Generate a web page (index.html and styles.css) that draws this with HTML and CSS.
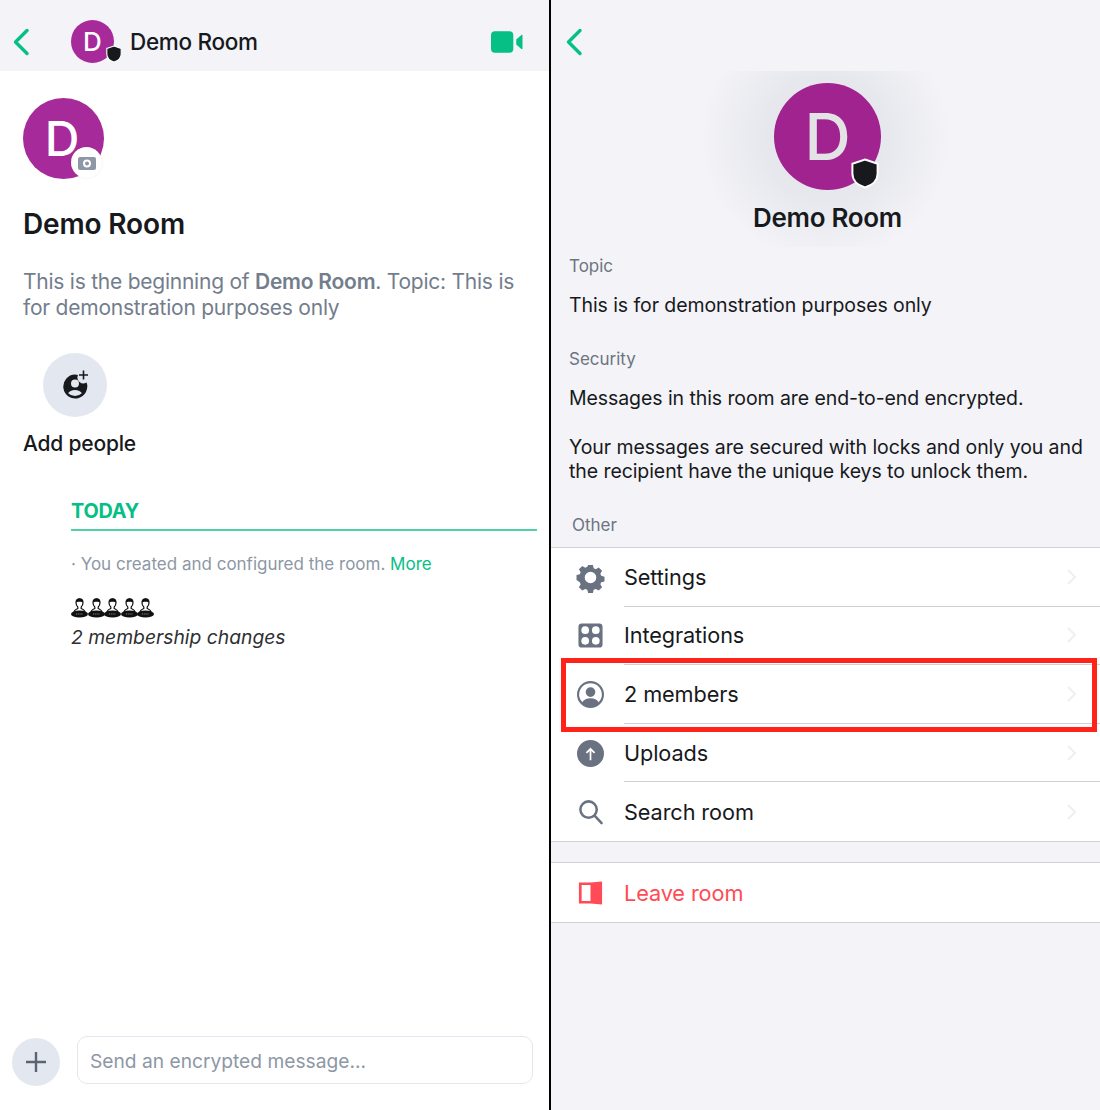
FILE: index.html
```html
<!DOCTYPE html>
<html lang="en">
<head>
<meta charset="utf-8">
<title>Demo Room</title>
<link rel="stylesheet" href="styles.css">
</head>
<body>
<div class="screens">
  <main class="room">
    <header class="room-bar">
      <svg class="back" width="18" height="28" viewBox="0 0 18 28"><path d="M15 2.500 3.500 14 15 25.500" /></svg>
      <div class="bar-avatar">
        <span>D</span>
        <svg class="shield shield-small" viewBox="0 0 20 22"><path d="M10 1 19 4v7c0 5-4 8.500-9 10C5 19.500 1 16 1 11V4z"/></svg>
      </div>
      <div class="bar-title">Demo Room</div>
      <svg class="video" width="32" height="22" viewBox="0 0 33 22"><rect x="0" y="0" width="23" height="22" rx="4"/><path d="M26 8.500 31 4c.8-.7 1.500-.4 1.500.6v12.800c0 1-.7 1.300-1.500.6l-5-4.500z"/></svg>
    </header>
    <section class="room-body">
      <div class="intro-avatar">
        <span>D</span>
        <div class="camera-badge">
          <svg width="18" height="14" viewBox="0 0 18 14"><path fill-rule="evenodd" d="M2 1h14a2 2 0 0 1 2 2v9a2 2 0 0 1-2 2H2a2 2 0 0 1-2-2V3a2 2 0 0 1 2-2zm7 2.500a4 4 0 1 0 0 8 4 4 0 0 0 0-8zm0 2a2 2 0 1 1 0 4 2 2 0 0 1 0-4z"/></svg>
        </div>
      </div>
      <h1 class="intro-title">Demo Room</h1>
      <p class="intro-text">This is the beginning of <b>Demo Room</b>. Topic: This is for demonstration purposes only</p>
      <div class="add-circle">
        <svg width="30" height="30" viewBox="-2 1 30 30"><path fill-rule="evenodd" d="M13 5.500a12 12 0 0 1 3 .4 6 6 0 0 0 8.600 7.600 12 12 0 1 1-11.600-8zm0 5a4 4 0 1 0 0 8 4 4 0 0 0 0-8zm0 10.500c-3.300 0-6 1.300-6.800 3.300a9.800 9.800 0 0 0 13.600 0C19 22.300 16.300 21 13 21z"/><path class="add-plus" d="M21.500 1.500v9M17 6h9"/></svg>
      </div>
      <div class="add-label">Add people</div>
      <div class="timeline">
        <div class="today">TODAY</div>
        <div class="event">· You created and configured the room. <a class="more">More</a></div>
        <div class="people">
          <svg class="person" viewBox="0 0 17 20"><use href="#person-shape"/></svg>
          <svg class="person" viewBox="0 0 17 20"><use href="#person-shape"/></svg>
          <svg class="person" viewBox="0 0 17 20"><use href="#person-shape"/></svg>
          <svg class="person" viewBox="0 0 17 20"><use href="#person-shape"/></svg>
          <svg class="person" viewBox="0 0 17 20"><use href="#person-shape"/></svg>
        </div>
        <div class="changes">2 membership changes</div>
      </div>
    </section>
    <footer class="composer">
      <div class="plus-circle">
        <svg width="22" height="22" viewBox="0 0 22 22"><path d="M11 1v20M1 11h20"/></svg>
      </div>
      <div class="message-box">Send an encrypted message...</div>
    </footer>
  </main>

  <aside class="details">
    <div class="details-bar">
      <svg class="back" width="18" height="28" viewBox="0 0 18 28"><path d="M15 2.500 3.500 14 15 25.500"/></svg>
    </div>
    <div class="hero">
      <div class="hero-avatar">
        <span>D</span>
        <svg class="shield shield-large" viewBox="0 0 20 22"><path d="M10 1 19 4v7c0 5-4 8.500-9 10C5 19.500 1 16 1 11V4z"/></svg>
      </div>
      <div class="hero-name">Demo Room</div>
    </div>
    <div class="label label-topic">Topic</div>
    <p class="copy copy-topic">This is for demonstration purposes only</p>
    <div class="label label-security">Security</div>
    <p class="copy copy-security">Messages in this room are end-to-end encrypted.</p>
    <p class="copy copy-keys">Your messages are secured with locks and only you and the recipient have the unique keys to unlock them.</p>
    <div class="label label-other">Other</div>

    <div class="menu">
      <div class="row">
        <svg class="row-icon" viewBox="0 0 28 28"><path fill-rule="evenodd" d="M11.500 1h5l.8 3.400 2.200 1 3-1.800 3.500 3.500-1.800 3 .9 2.200 3.400.8v5l-3.400.8-.9 2.200 1.800 3-3.500 3.500-3-1.800-2.200.9-.8 3.400h-5l-.8-3.400-2.200-.9-3 1.800-3.500-3.500 1.800-3-.9-2.200L-.5 16.500v-5l3.400-.8.900-2.200-1.800-3L5.500 2l3 1.800 2.200-.9zM14 8a6 6 0 1 0 0 12 6 6 0 0 0 0-12z"/></svg>
        <div class="row-main"><span>Settings</span><svg class="chev" width="9" height="16" viewBox="0 0 9 16"><path d="M1 1l7 7-7 7"/></svg></div>
      </div>
      <div class="row">
        <svg class="row-icon" viewBox="0 0 28 28"><path fill-rule="evenodd" d="M5 1.500h18a3.500 3.500 0 0 1 3.500 3.500v18a3.500 3.500 0 0 1-3.500 3.500H5A3.500 3.500 0 0 1 1.500 23V5A3.500 3.500 0 0 1 5 1.500zM8.500 4.500a4 4 0 1 0 0 8 4 4 0 0 0 0-8zm11 0a4 4 0 1 0 0 8 4 4 0 0 0 0-8zm-11 11a4 4 0 1 0 0 8 4 4 0 0 0 0-8zm11 0a4 4 0 1 0 0 8 4 4 0 0 0 0-8z"/></svg>
        <div class="row-main"><span>Integrations</span><svg class="chev" width="9" height="16" viewBox="0 0 9 16"><path d="M1 1l7 7-7 7"/></svg></div>
      </div>
      <div class="row">
        <svg class="row-icon" viewBox="0 0 28 28"><path fill-rule="evenodd" d="M14 0a14 14 0 1 1 0 28 14 14 0 0 1 0-28zm0 2.300a11.700 11.700 0 0 0-8.500 19.800C7 19.200 10.200 18 14 18s7 1.200 8.500 4.100A11.700 11.700 0 0 0 14 2.300zM14 6.500a5 5 0 1 1 0 10 5 5 0 0 1 0-10z"/></svg>
        <div class="row-main"><span>2 members</span><svg class="chev" width="9" height="16" viewBox="0 0 9 16"><path d="M1 1l7 7-7 7"/></svg></div>
      </div>
      <div class="row">
        <svg class="row-icon" viewBox="0 0 28 28"><path fill-rule="evenodd" d="M14 0a14 14 0 1 1 0 28 14 14 0 0 1 0-28zm-.9 8.800-4 4 1.300 1.300 2.700-2.700V21h1.800v-9.600l2.700 2.700 1.300-1.300-4-4-.9-.9z"/></svg>
        <div class="row-main"><span>Uploads</span><svg class="chev" width="9" height="16" viewBox="0 0 9 16"><path d="M1 1l7 7-7 7"/></svg></div>
      </div>
      <div class="row">
        <svg class="row-icon row-stroke" viewBox="0 0 28 28"><circle cx="12" cy="12" r="8.500"/><path d="M18.500 18.500 25.500 26"/></svg>
        <div class="row-main"><span>Search room</span><svg class="chev" width="9" height="16" viewBox="0 0 9 16"><path d="M1 1l7 7-7 7"/></svg></div>
      </div>
    </div>

    <div class="menu menu-leave">
      <div class="row">
        <svg class="row-icon row-leave" viewBox="0 0 28 28"><path fill-rule="evenodd" d="M2 3.500h12L26 2.500v24l-12-1H2zm2.800 2.800v16.400H14V6.300z"/></svg>
        <div class="row-main"><span class="leave-text">Leave room</span></div>
      </div>
    </div>
  </aside>
  <div class="highlight"></div>
</div>
<svg class="defs" width="0" height="0">
  <defs>
    <g id="person-shape">
      <path fill="#fff" stroke="#111" stroke-width="1.200" d="M3 14.500c0-2.500 2.500-3.500 3.800-4V9C5.500 8 5 6.500 5 4.500 5 2 6.500 .8 8.500 .8S12 2 12 4.500C12 6.500 11.500 8 10.200 9v1.500c1.300.5 3.800 1.500 3.800 4z"/>
      <path fill="#111" d="M5 4.500c1-1 6-1 7 0C12 2 10.500 .5 8.500 .5S5 2 5 4.500z"/>
      <ellipse fill="#111" cx="8.500" cy="16" rx="8.500" ry="3.600"/>
      <path fill="none" stroke="#9a9a9a" stroke-width=".9" stroke-dasharray="1 .8" d="M5 16h7"/>
    </g>
  </defs>
</svg>
</body>
</html>
```
FILE: styles.css
```css
* { box-sizing: border-box; }
html, body { margin: 0; padding: 0; }
body {
  width: 1100px;
  height: 1110px;
  overflow: hidden;
  background: #fff;
  font-family: Inter, "Liberation Sans", sans-serif;
  color: #17191c;
}
p, h1 { margin: 0; }
.defs { position: absolute; }

.screens {
  position: relative;
  display: flex;
  width: 1100px;
  height: 1110px;
}

/* left screen */
.room {
  width: 549px;
  height: 1110px;
  display: flex;
  flex-direction: column;
  background: #fff;
}
.room-bar {
  height: 71px;
  flex: none;
  display: flex;
  align-items: center;
  padding: 12px 26px 0 12px;
  background: #f3f3f8;
}
.back { flex: none; }
.back path {
  fill: none;
  stroke: #05bf85;
  stroke-width: 3.400;
  stroke-linecap: round;
  stroke-linejoin: round;
}
.bar-avatar {
  position: relative;
  width: 43px;
  height: 43px;
  margin-left: 41px;
  flex: none;
  border-radius: 50%;
  background: #a72a9a;
  color: #fff;
  display: flex;
  align-items: center;
  justify-content: center;
  font-size: 26px;
  font-weight: 500;
}
.shield {
  position: absolute;
  fill: #17191c;
  stroke: #fff;
  stroke-width: 1.400;
}
.shield-small { width: 16px; height: 18px; right: -8px; bottom: 0; }
.bar-title {
  margin-left: 16px;
  font-size: 22.500px;
  font-weight: 500;
  letter-spacing: -0.300px;
  flex: 1;
}
.video { fill: #05bf85; flex: none; }

.room-body {
  flex: 1;
  padding: 27px 12px 0 23px;
}
.intro-avatar {
  position: relative;
  width: 81px;
  height: 81px;
  border-radius: 50%;
  background: #a72a9a;
  color: #fff;
  display: flex;
  align-items: center;
  justify-content: center;
  font-size: 48px;
  font-weight: 500;
}
.intro-avatar span { margin-right: 3px; }
.camera-badge {
  position: absolute;
  right: 2px;
  bottom: 1px;
  width: 31px;
  height: 31px;
  border-radius: 50%;
  background: #fff;
  display: flex;
  align-items: center;
  justify-content: center;
  fill: #8d97a5;
  box-shadow: 0 0 2px rgba(0, 0, 0, 0.1);
}
.intro-title {
  margin-top: 27px;
  height: 36px;
  line-height: 36px;
  font-size: 28px;
  font-weight: 600;
  letter-spacing: -0.150px;
}
.intro-text {
  margin-top: 27px;
  width: 510px;
  font-size: 21px;
  line-height: 26px;
  color: #737d8c;
  letter-spacing: -0.240px;
}
.intro-text b { font-weight: 600; }
.add-circle {
  width: 64px;
  height: 64px;
  margin: 32px 0 0 20px;
  border-radius: 50%;
  background: #e3e8f0;
  display: flex;
  align-items: center;
  justify-content: center;
  fill: #17191c;
}
.add-plus { fill: none; stroke: #17191c; stroke-width: 1.600; }
.add-label {
  margin-top: 13px;
  font-size: 21px;
  line-height: 28px;
  font-weight: 500;
  letter-spacing: -0.200px;
}
.timeline { margin: 40px 0 0 48px; }
.today {
  color: #05bf85;
  font-size: 19.800px;
  font-weight: 700;
  line-height: 26px;
  padding-bottom: 5px;
  border-bottom: 2px solid #4fd0a8;
  letter-spacing: -0.200px;
}
.event {
  margin-top: 21px;
  font-size: 17px;
  line-height: 24px;
  color: #8d97a5;
}
.more { color: #05bf85; }
.people {
  display: flex;
  margin-top: 22px;
  height: 20px;
}
.person { width: 17px; height: 20px; margin-right: -0.500px; flex: none; }
.changes {
  margin-top: 6px;
  font-size: 19.300px;
  line-height: 26px;
  font-style: italic;
  color: #2e2f32;
}
.composer {
  flex: none;
  height: 74px;
  display: flex;
  align-items: flex-start;
  padding: 0 16px 0 12px;
}
.plus-circle {
  width: 48px;
  height: 48px;
  margin-top: 2px;
  flex: none;
  border-radius: 50%;
  background: #e3e8f0;
  display: flex;
  align-items: center;
  justify-content: center;
}
.plus-circle path { fill: none; stroke: #5c6470; stroke-width: 2.400; }
.message-box {
  margin-left: 17px;
  flex: 1;
  height: 48px;
  border: 1.500px solid #e3e8f0;
  border-radius: 10px;
  padding: 1px 0 0 12px;
  display: flex;
  align-items: center;
  font-size: 19.200px;
  color: #8d97a5;
}

/* right screen */
.details {
  width: 551px;
  height: 1110px;
  flex: none;
  border-left: 2px solid #000;
  background: #f3f3f8;
  display: flex;
  flex-direction: column;
}
.details-bar {
  height: 71px;
  flex: none;
  display: flex;
  align-items: center;
  padding: 12px 0 0 14px;
}
.hero {
  display: flex;
  flex-direction: column;
  align-items: center;
  height: 176px;
  padding-left: 4px;
  background: radial-gradient(circle 125px at 50% 38%, #e3e4ea 0, #e7e8ed 50%, #f3f3f8 100%);
}
.hero-avatar {
  position: relative;
  width: 107px;
  height: 107px;
  margin-top: 12px;
  border-radius: 50%;
  background: #a12390;
  color: #e3e3e6;
  display: flex;
  align-items: center;
  justify-content: center;
  font-size: 64px;
  font-weight: 500;
}
.shield-large { width: 28px; height: 31px; right: 2px; bottom: 1px; }
.hero-name {
  margin-top: 12px;
  font-size: 26px;
  line-height: 32px;
  font-weight: 600;
  letter-spacing: -0.300px;
}
.label {
  font-size: 17px;
  line-height: 22px;
  color: #6d7580;
  padding-left: 18px;
}
.label-topic { margin-top: 8px; }
.copy {
  font-size: 19.500px;
  line-height: 24px;
  padding: 0 10px 0 18px;
  letter-spacing: -0.080px;
}
.copy-topic { margin-top: 16px; }
.label-security { margin-top: 31px; }
.copy-security { margin-top: 16px; }
.copy-keys { margin-top: 25px; }
.label-other { margin-top: 31px; padding-left: 21px; }

.menu {
  margin-top: 11px;
  background: #fff;
  border-top: 1.500px solid #d0d0d5;
  border-bottom: 1.500px solid #d0d0d5;
}
.menu-leave { margin-top: 20.500px; }
.row {
  display: flex;
  align-items: stretch;
  height: 58.600px;
  padding-left: 26px;
}
.row-icon {
  width: 27px;
  height: 27px;
  align-self: center;
  flex: none;
  fill: #6a7180;
  overflow: visible;
}
.row-stroke { fill: none; stroke: #6a7180; stroke-width: 2.600; stroke-linecap: round; }
.row-leave { fill: #ff4b55; }
.row-main {
  margin-left: 20px;
  flex: 1;
  display: flex;
  align-items: center;
  justify-content: space-between;
  padding-right: 24px;
  font-size: 21.700px;
  letter-spacing: -0.100px;
  border-bottom: 1.500px solid #d0d0d5;
}
.row:last-child .row-main { border-bottom: 0; }
.leave-text { color: #ff4b55; }
.chev path { fill: none; stroke: #eeeff2; stroke-width: 2; }

.highlight {
  position: absolute;
  left: 561px;
  top: 658px;
  width: 536px;
  height: 74px;
  border: 5px solid #ff2319;
}
```
